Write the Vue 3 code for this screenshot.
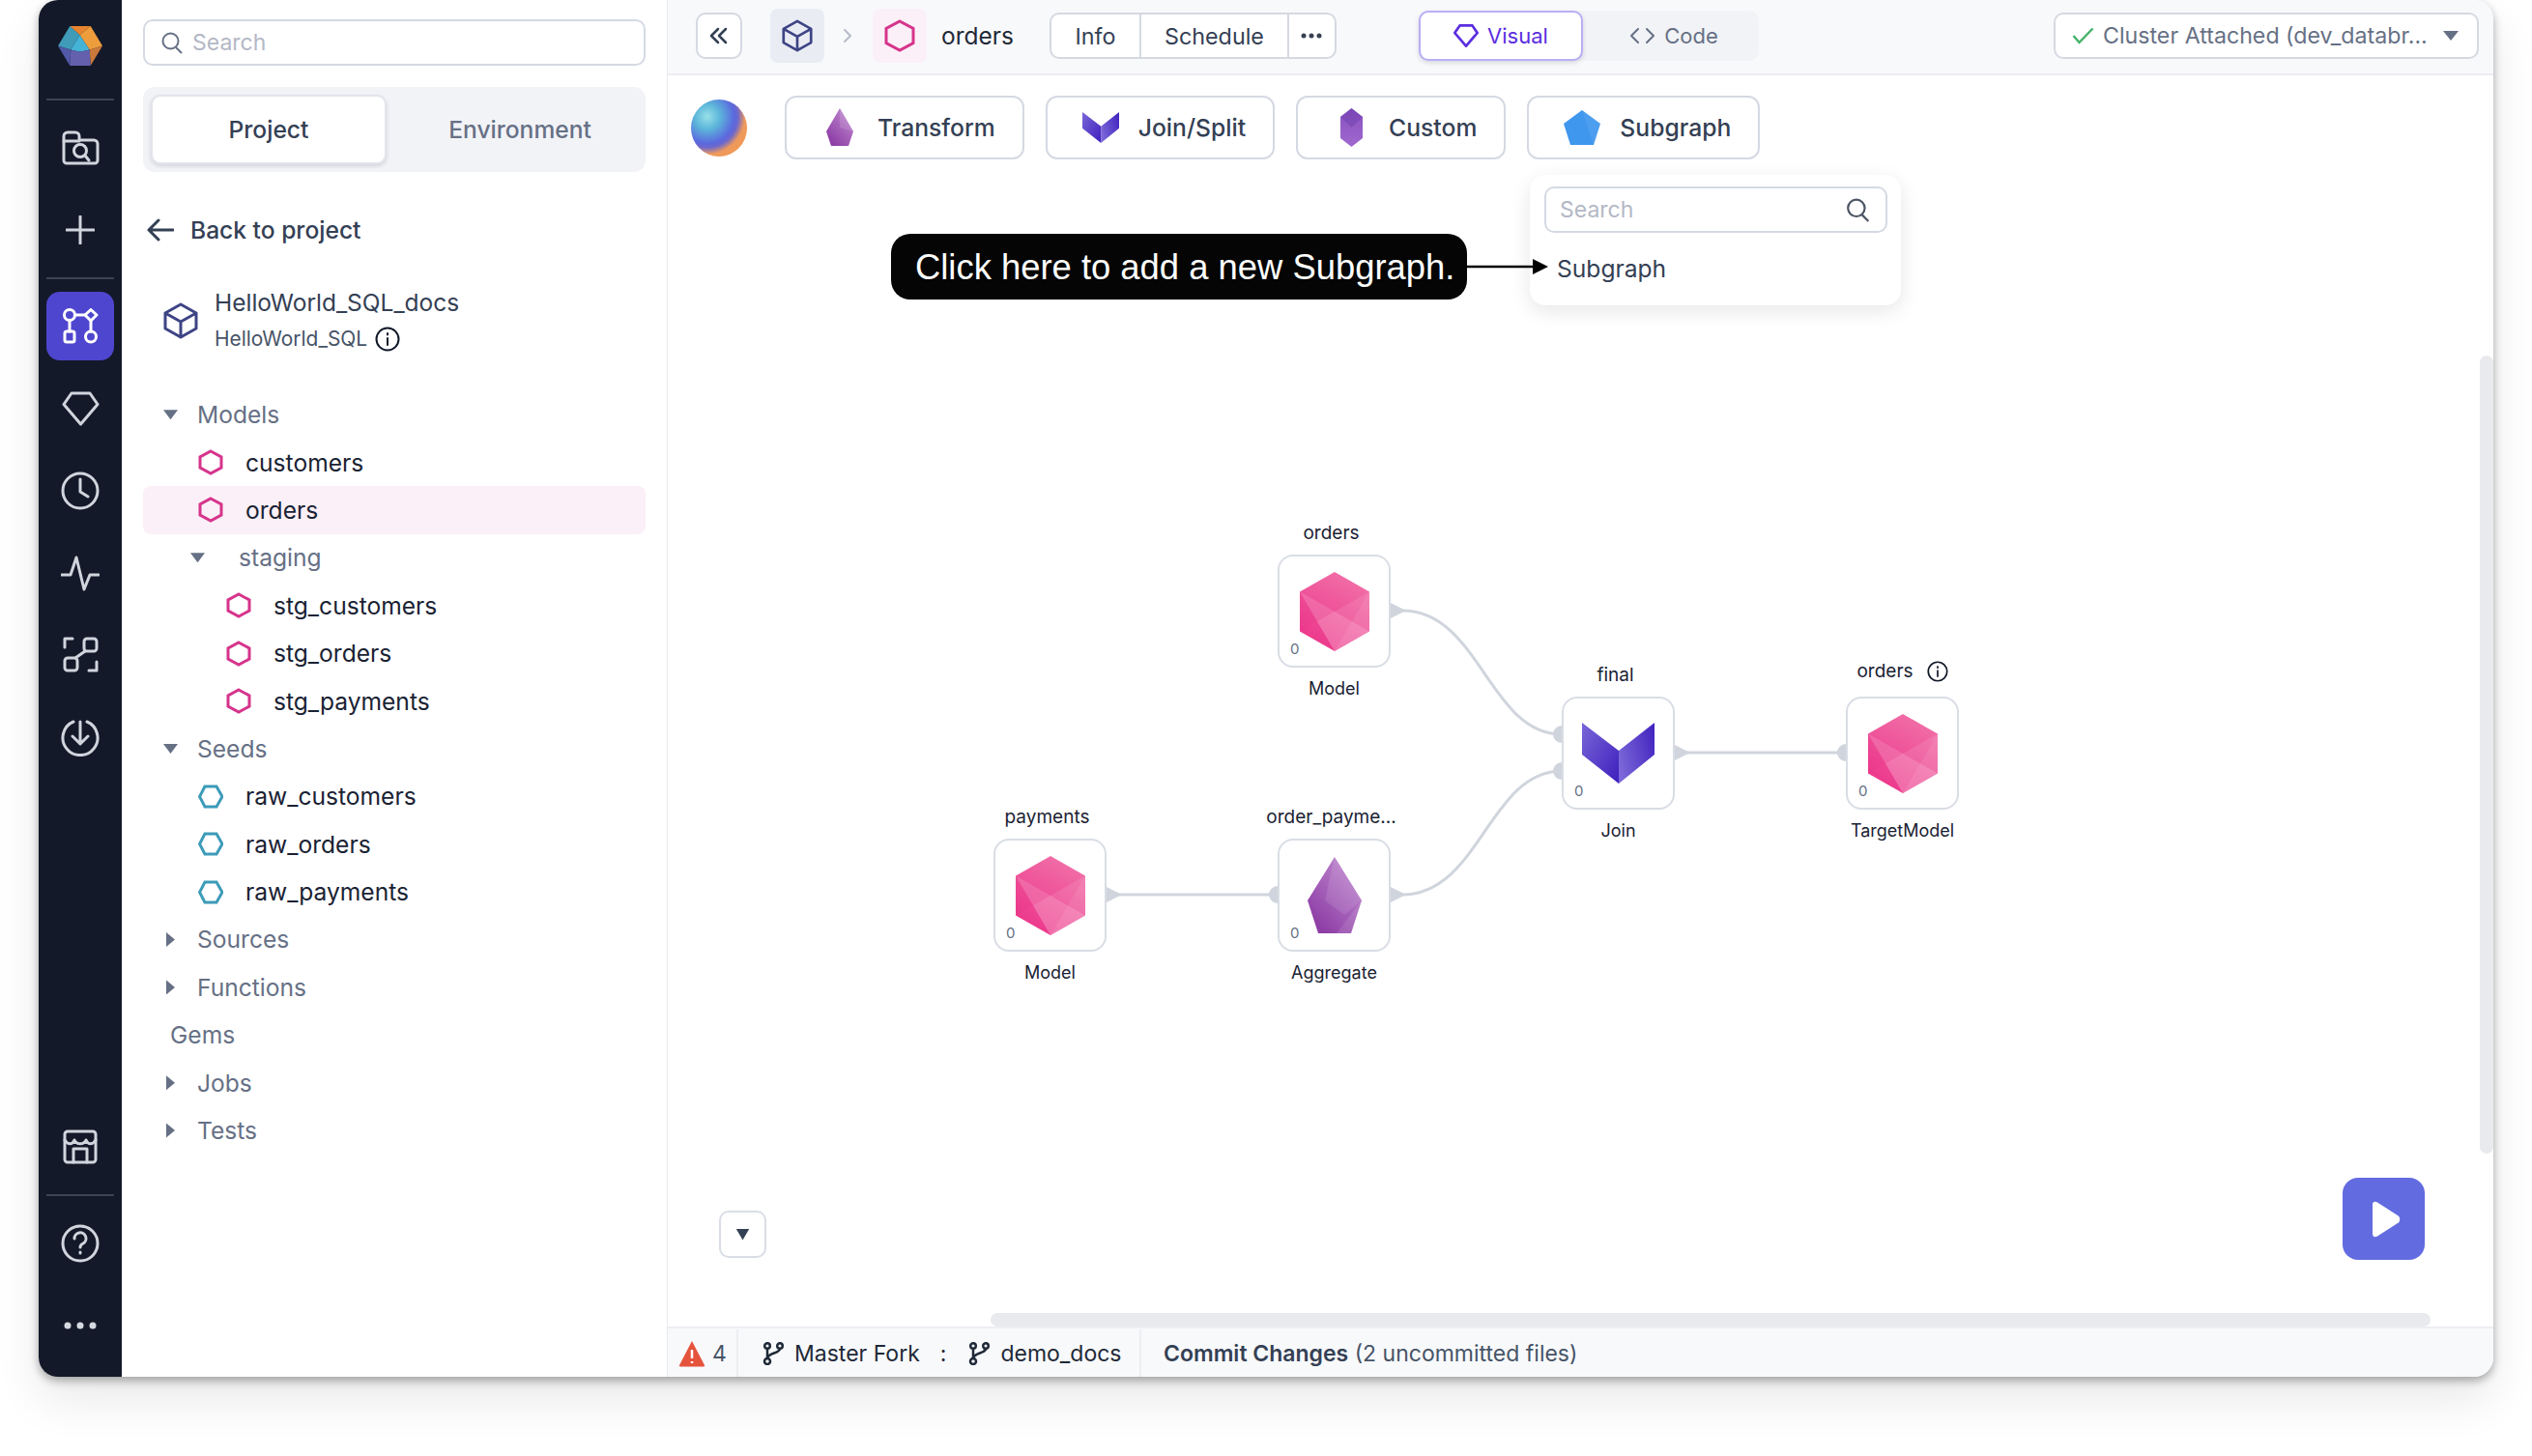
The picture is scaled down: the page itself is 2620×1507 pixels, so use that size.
<script setup>
const tree = [
  { label: 'Models', kind: 'open' },
  { label: 'customers', kind: 'model' },
  { label: 'orders', kind: 'model', active: true },
  { label: 'staging', kind: 'open', sub: true },
  { label: 'stg_customers', kind: 'model', sub: true },
  { label: 'stg_orders', kind: 'model', sub: true },
  { label: 'stg_payments', kind: 'model', sub: true },
  { label: 'Seeds', kind: 'open' },
  { label: 'raw_customers', kind: 'seed' },
  { label: 'raw_orders', kind: 'seed' },
  { label: 'raw_payments', kind: 'seed' },
  { label: 'Sources', kind: 'closed' },
  { label: 'Functions', kind: 'closed' },
  { label: 'Gems', kind: 'plain' },
  { label: 'Jobs', kind: 'closed' },
  { label: 'Tests', kind: 'closed' }
]

const gems = [
  { name: 'orders', type: 'Model', icon: 'hex', x: 631, y: 496 },
  { name: 'payments', type: 'Model', icon: 'hex', x: 337, y: 790 },
  { name: 'order_payme...', type: 'Aggregate', icon: 'gem', x: 631, y: 790 },
  { name: 'final', type: 'Join', icon: 'join', x: 925, y: 643 },
  { name: 'orders', type: 'TargetModel', icon: 'hex', x: 1219, y: 643, info: true }
]

const triangles = [[748, 554], [454, 848], [748, 848], [1042, 701]]
const sockets = [[631, 848], [925, 682], [925, 720], [1219, 701]]
</script>

<template>
  <div class="page">
    <div class="window">
      <aside class="rail">
        <div class="slot logo">
          <svg width="46" height="41" viewBox="0 0 45 40">
            <polygon points="12,0 33,0 22,9" fill="#e8842f" />
            <polygon points="33,0 45,20 32,24 22,9" fill="#ee9d3c" />
            <polygon points="45,20 33,40 32,24" fill="#c9793a" />
            <polygon points="12,0 22,9 13,24 0,20" fill="#3f9bb8" />
            <polygon points="22,9 32,24 22,26 13,24" fill="#45b3d6" />
            <polygon points="13,24 22,26 32,24 33,40 12,40" fill="#6460ad" />
            <polygon points="0,20 13,24 12,40" fill="#5259a8" />
          </svg>
        </div>
        <div class="rail-line first"></div>
        <div class="slot">
          <svg width="39" height="36" viewBox="0 0 39 36" class="ri">
            <path d="M2 11V6a4 4 0 0 1 4-4h8a4 4 0 0 1 4 4v4h15a4 4 0 0 1 4 4v17a3 3 0 0 1-3 3H5a3 3 0 0 1-3-3z" />
            <path d="M2 11h16" />
            <circle cx="19" cy="21" r="6.5" />
            <path d="M24 26l4 5" />
          </svg>
        </div>
        <div class="slot">
          <svg width="30" height="30" viewBox="0 0 30 30" class="ri"><path d="M15 1v28M1 15h28" /></svg>
        </div>
        <div class="rail-line"></div>
        <div class="slot on">
          <svg width="37" height="37" viewBox="0 0 37 37" class="ri white">
            <circle cx="7" cy="7" r="5.5" />
            <path d="M29 1.5l6 5.5-6 6-6-6z" />
            <rect x="2" y="24" width="10" height="11" rx="2" />
            <circle cx="29" cy="29.5" r="5.5" />
            <path d="M12.5 7h10.500M7 12.500V24M29 13v11" />
          </svg>
        </div>
        <div class="slot">
          <svg width="39" height="36" viewBox="0 0 39 36" class="ri"><path d="M10 2h19l8 11.500L19.500 34 2 13.500z" /></svg>
        </div>
        <div class="slot">
          <svg width="40" height="40" viewBox="0 0 40 40" class="ri"><circle cx="20" cy="20" r="18" /><path d="M20 8v13l8 5" /></svg>
        </div>
        <div class="slot">
          <svg width="40" height="38" viewBox="0 0 40 38" class="ri"><path d="M1 21h9l6-18 8 33 6-15h9" /></svg>
        </div>
        <div class="slot">
          <svg width="37" height="37" viewBox="0 0 37 37" class="ri">
            <path d="M2 11V2h8M35 26v9h-8" />
            <rect x="22" y="2" width="13" height="13" rx="3" />
            <rect x="2" y="22" width="13" height="13" rx="3" />
            <path d="M13 22l10-7" />
          </svg>
        </div>
        <div class="slot">
          <svg width="40" height="40" viewBox="0 0 40 40" class="ri">
            <path d="M13 4a18 18 0 1 0 14 0" />
            <path d="M20 4v22M12 19l8 8 8-8" />
          </svg>
        </div>

        <div class="rail-bottom">
          <div class="slot">
            <svg width="36" height="36" viewBox="0 0 36 36" class="ri">
              <rect x="2" y="2" width="32" height="32" rx="3" />
              <path d="M2 11c3 5 8 5 10 0 2 5 10 5 12 0 2 5 7 5 10 0M11 34V20h14v14" />
            </svg>
          </div>
          <div class="rail-line"></div>
          <div class="slot">
            <svg width="40" height="40" viewBox="0 0 40 40" class="ri">
              <circle cx="20" cy="20" r="18" />
              <path d="M14 15a6 6 0 1 1 9 5c-2 1-3 2-3 4" />
              <path d="M20 29v1" />
            </svg>
          </div>
          <div class="slot">
            <svg width="34" height="8" viewBox="0 0 34 8"><circle cx="4" cy="4" r="3.500" fill="#d5d9e0" /><circle cx="17" cy="4" r="3.500" fill="#d5d9e0" /><circle cx="30" cy="4" r="3.500" fill="#d5d9e0" /></svg>
          </div>
        </div>
      </aside>

      <aside class="panel">
        <div class="search">
          <svg width="22" height="23" viewBox="0 0 22 23" class="si"><circle cx="9.500" cy="9.500" r="8" /><path d="M15 16l6 6" /></svg>
          <span>Search</span>
        </div>
        <div class="tabs">
          <div class="tab sel">Project</div>
          <div class="tab">Environment</div>
        </div>
        <div class="back">
          <svg width="28" height="24" viewBox="0 0 28 24" class="arrow"><path d="M27 12H2M12 2L2 12l10 10" /></svg>
          <span>Back to project</span>
        </div>
        <div class="project">
          <svg width="36" height="38" viewBox="0 0 36 38" class="cube"><path d="M18 2l16 9v16l-16 9-16-9V11zM2 11l16 9 16-9M18 20v16" /></svg>
          <div>
            <div class="p-title">HelloWorld_SQL_docs</div>
            <div class="p-sub">
              HelloWorld_SQL
              <svg width="26" height="26" viewBox="0 0 26 26" class="info"><circle cx="13" cy="13" r="11.500" /><path d="M13 12v7M13 7v1.500" /></svg>
            </div>
          </div>
        </div>

        <div class="tree">
          <div
            v-for="item in tree"
            :key="item.label"
            class="row"
            :class="[item.kind, { sub: item.sub, active: item.active }]"
          >
            <i v-if="item.kind === 'open'" class="caret down"></i>
            <i v-else-if="item.kind === 'closed'" class="caret right"></i>
            <svg v-else-if="item.kind === 'model'" width="26" height="27" viewBox="0 0 26 27" class="leaf"><path d="M13 2l11 6v11l-11 6-11-6V8z" fill="none" stroke="#d6348c" stroke-width="3" /></svg>
            <svg v-else-if="item.kind === 'seed'" width="26" height="25" viewBox="0 0 26 25" class="leaf"><path d="M7 2h12l6 10.500L19 23H7L1.500 12.500z" fill="none" stroke="#3c9bb9" stroke-width="3" /></svg>
            <span>{{ item.label }}</span>
          </div>
        </div>
      </aside>

      <main class="main">
        <header class="topbar">
          <button class="collapse">
            <svg width="20" height="18" viewBox="0 0 20 18" class="thin"><path d="M9 2L2 9l7 7M17 2l-7 7 7 7" /></svg>
          </button>
          <div class="crumb blue">
            <svg width="32" height="34" viewBox="0 0 36 38" class="cube"><path d="M18 2l16 9v16l-16 9-16-9V11zM2 11l16 9 16-9M18 20v16" /></svg>
          </div>
          <svg width="10" height="16" viewBox="0 0 10 16" class="chev"><path d="M2 2l6 6-6 6" /></svg>
          <div class="crumb pink">
            <svg width="32" height="34" viewBox="0 0 32 34"><path d="M16 2l14 7.500v15L16 32 2 24.500v-15z" fill="none" stroke="#d6348c" stroke-width="3" /></svg>
          </div>
          <span class="crumb-name">orders</span>
          <div class="btn-group">
            <div class="gbtn g-info">Info</div>
            <div class="gbtn g-sched">Schedule</div>
            <div class="gbtn more">
              <svg width="22" height="6" viewBox="0 0 22 6"><circle cx="3" cy="3" r="2.500" fill="#374151" /><circle cx="11" cy="3" r="2.500" fill="#374151" /><circle cx="19" cy="3" r="2.500" fill="#374151" /></svg>
            </div>
          </div>
          <div class="mode">
            <div class="mode-btn sel">
              <svg width="26" height="24" viewBox="0 0 39 36"><path d="M10 2h19l8 11.500L19.500 34 2 13.500z" fill="none" stroke="#5b2ee0" stroke-width="4" /></svg>
              Visual
            </div>
            <div class="mode-btn code">
              <svg width="27" height="18" viewBox="0 0 27 18" class="thin gray"><path d="M9 2L2 9l7 7M18 2l7 7-7 7" /></svg>
              Code
            </div>
          </div>
          <div class="cluster">
            <svg width="23" height="18" viewBox="0 0 23 18"><path d="M1.500 9l6 7L21.500 1.500" fill="none" stroke="#45b36b" stroke-width="2.500" /></svg>
            <span>Cluster Attached (dev_databr...</span>
            <i class="caret down big"></i>
          </div>
        </header>

        <section class="canvas">
          <svg class="edges" width="1889" height="1295" viewBox="0 0 1889 1295">
            <defs>
              <linearGradient id="hexFill" x1="0.7" y1="0" x2="0.2" y2="1">
                <stop offset="0" stop-color="#f170a8" />
                <stop offset="1" stop-color="#ec3389" />
              </linearGradient>
              <linearGradient id="gemFill" x1="0.8" y1="0.1" x2="0.2" y2="0.9">
                <stop offset="0" stop-color="#bd85cd" />
                <stop offset="1" stop-color="#8e3fa6" />
              </linearGradient>
              <linearGradient id="joinL" x1="0" y1="0" x2="1" y2="1">
                <stop offset="0" stop-color="#7a66d8" />
                <stop offset="1" stop-color="#3d1fbd" />
              </linearGradient>
              <linearGradient id="joinR" x1="0" y1="0.6" x2="1" y2="0.2">
                <stop offset="0" stop-color="#7a66d8" />
                <stop offset="1" stop-color="#4426c0" />
              </linearGradient>
              <linearGradient id="customFill" x1="0" y1="0" x2="0" y2="1">
                <stop offset="0" stop-color="#8750bf" />
                <stop offset="1" stop-color="#a069cf" />
              </linearGradient>
            </defs>
            <g fill="none" stroke="#d0d5dd" stroke-width="3">
              <path d="M760 554C840 554 850 682 925 682" />
              <path d="M760 848C840 848 850 720 925 720" />
              <path d="M460 848H631" />
              <path d="M1050 701H1219" />
            </g>
            <polygon v-for="t in triangles" :key="t[0] + '-' + t[1]" :points="`${t[0]},${t[1] - 8} ${t[0] + 16},${t[1]} ${t[0]},${t[1] + 8}`" fill="#d0d5dd" />
            <circle v-for="s in sockets" :key="s[0] + '-' + s[1]" :cx="s[0]" :cy="s[1]" r="9" fill="#d0d5dd" />
          </svg>

          <div class="toolbar">
            <div class="orb"></div>
            <div class="tool">
              <span class="tool-ico"><svg width="28" height="40" viewBox="0 0 28 40"><polygon points="14,0 28,24 23,39 5,39 0,24" fill="url(#gemFill)" /><polygon points="14,0 28,24 14,20" fill="#fff" opacity=".12" /></svg></span>
              Transform
            </div>
            <div class="tool">
              <span class="tool-ico"><svg width="38" height="32" viewBox="0 0 75 63"><polygon points="0,0 38,29 38,63 0,33" fill="url(#joinL)" /><polygon points="38,29 75,0 75,33 38,63" fill="url(#joinR)" /></svg></span>
              Join/Split
            </div>
            <div class="tool">
              <span class="tool-ico"><svg width="23" height="40" viewBox="0 0 23 40"><polygon points="11.500,0 23,9 23,31 11.500,40 0,31 0,9" fill="url(#customFill)" /><polygon points="0,9 11.500,0 23,9 11.500,20" fill="#6f3fae" opacity=".5" /></svg></span>
              Custom
            </div>
            <div class="tool">
              <span class="tool-ico"><svg width="38" height="36" viewBox="0 0 38 36"><polygon points="19,0 38,14 31,36 7,36 0,14" fill="#4097ee" /><polygon points="19,0 38,14 31,36" fill="#fff" opacity=".07" /></svg></span>
              Subgraph
            </div>
          </div>

          <div class="callout">
            <span>Click here to add a new Subgraph.</span>
            <svg class="pointer" width="86" height="18" viewBox="0 0 86 18"><path d="M0 9h70" stroke="#000" stroke-width="2.500" /><polygon points="69,1 85,9 69,17" fill="#000" /></svg>
          </div>

          <div class="menu">
            <div class="menu-search">
              <span>Search</span>
              <svg width="25" height="25" viewBox="0 0 22 23" class="si dark"><circle cx="9.500" cy="9.500" r="8" /><path d="M15 16l6 6" /></svg>
            </div>
            <div class="menu-item">Subgraph</div>
          </div>

          <div
            v-for="gem in gems"
            :key="gem.type + gem.x"
            class="node"
            :style="{ left: gem.x + 'px', top: gem.y + 'px' }"
          >
            <div class="node-title" :class="{ target: gem.info }">
              <span>{{ gem.name }}</span>
              <svg v-if="gem.info" width="22" height="22" viewBox="0 0 26 26" class="info"><circle cx="13" cy="13" r="11.500" /><path d="M13 12v7M13 7v1.500" /></svg>
            </div>
            <svg v-if="gem.icon === 'hex'" width="72" height="82" viewBox="0 0 72 82">
              <polygon points="36,0 72,20.500 72,61.500 36,82 0,61.500 0,20.500" fill="url(#hexFill)" />
              <polygon points="0,20.500 36,41 72,61.500 36,82" fill="#fff" opacity=".24" />
              <polygon points="72,20.500 36,41 72,61.500" fill="#fff" opacity=".1" />
              <polygon points="72,20.500 36,82 54,71.500 72,61.500" fill="#fff" opacity=".08" />
              <polygon points="0,61.500 36,41 0,20.500" fill="#ec3389" opacity=".25" />
            </svg>
            <svg v-else-if="gem.icon === 'gem'" width="56" height="79" viewBox="0 0 56 79">
              <polygon points="28,0 56,45 45,79 11,79 0,45" fill="url(#gemFill)" />
              <polygon points="28,0 56,45 38,60 18,45" fill="#fff" opacity=".1" />
              <polygon points="56,45 45,79 30,79" fill="#fff" opacity=".1" />
            </svg>
            <svg v-else width="75" height="63" viewBox="0 0 75 63">
              <polygon points="0,0 38,29 38,63 0,33" fill="url(#joinL)" />
              <polygon points="38,29 75,0 75,33 38,63" fill="url(#joinR)" />
            </svg>
            <span class="node-count">0</span>
            <div class="node-type">{{ gem.type }}</div>
          </div>

          <button class="fold"><i class="caret down dark"></i></button>
          <button class="play">
            <svg width="30" height="38" viewBox="0 0 30 38"><path d="M1 4c0-3 2-4 5-2.500L27 15c3 2 3 6 0 8L6 36.500C3 38 1 37 1 34z" fill="#fff" /></svg>
          </button>
          <div class="scroll-x"></div>
          <div class="scroll-y"></div>
        </section>

        <footer class="status">
          <div class="st warn">
            <svg width="28" height="28" viewBox="0 0 28 28"><path d="M14 1l13 25a1 1 0 0 1-1 1.500H2A1 1 0 0 1 1 26z" fill="#e5533d" /><path d="M14 10v9M14 22v2" stroke="#fff" stroke-width="2.500" /></svg>
            <span>4</span>
          </div>
          <div class="st branch">
            <svg width="24" height="24" viewBox="0 0 24 24" class="fork"><circle cx="6" cy="20" r="3" /><circle cx="6" cy="4" r="2.800" /><circle cx="19" cy="4" r="2.800" /><path d="M6 7v10M19 7c0 5-13 4-13 10" /></svg>
            <span>Master Fork</span>
            <span class="colon">:</span>
            <svg width="24" height="24" viewBox="0 0 24 24" class="fork"><circle cx="6" cy="20" r="3" /><circle cx="6" cy="4" r="2.800" /><circle cx="19" cy="4" r="2.800" /><path d="M6 7v10M19 7c0 5-13 4-13 10" /></svg>
            <span>demo_docs</span>
          </div>
          <div class="st commit"><b>Commit Changes</b> (2 uncommitted files)</div>
        </footer>
      </main>
    </div>
  </div>
</template>

<style>
html {
  overflow: hidden;
  background: #fff;
}
body {
  margin: 0;
}
</style>

<style scoped>
.page {
  width: 2620px;
  height: 1507px;
  box-sizing: border-box;
  padding-left: 40px;
  background: #fff;
}
.window {
  display: flex;
  width: 2540px;
  height: 1425px;
  border-radius: 20px;
  overflow: hidden;
  background: #fff;
  font-family: Inter, "Noto Sans", sans-serif;
  box-shadow: 0 4px 10px rgba(0, 0, 0, 0.32), 0 24px 48px rgba(0, 0, 0, 0.09);
}

/* left rail */
.rail {
  width: 86px;
  flex: none;
  box-sizing: border-box;
  background: #131929;
  display: flex;
  flex-direction: column;
  align-items: center;
  gap: 14px;
  padding: 12px 0 18px;
}
.slot {
  width: 70px;
  height: 71px;
  flex: none;
  display: flex;
  align-items: center;
  justify-content: center;
  border-radius: 14px;
}
.slot.on {
  background: #4f46cf;
}
.rail-line {
  width: 70px;
  height: 2px;
  flex: none;
  background: #3c4353;
  margin-bottom: -1px;
}
.rail-line.first {
  margin-top: 5px;
}
.rail-bottom {
  margin-top: auto;
  display: flex;
  flex-direction: column;
  align-items: center;
  gap: 14px;
}
.ri {
  fill: none;
  stroke: #d0d5dd;
  stroke-width: 3;
  stroke-linecap: round;
  stroke-linejoin: round;
}
.ri.white {
  stroke: #fff;
}

/* project panel */
.panel {
  width: 565px;
  flex: none;
  box-sizing: border-box;
  padding: 20px 22px 0 22px;
  border-right: 1px solid #e8eaee;
  color: #1a2233;
}
.search {
  height: 48px;
  box-sizing: border-box;
  display: flex;
  align-items: center;
  gap: 10px;
  padding-left: 17px;
  border: 2px solid #d5d9e2;
  border-radius: 10px;
  font-size: 23px;
  color: #b3b8c6;
}
.si {
  fill: none;
  stroke: #667085;
  stroke-width: 2;
}
.tabs {
  height: 88px;
  box-sizing: border-box;
  display: flex;
  align-items: center;
  margin-top: 22px;
  padding: 8px;
  background: #f2f3f7;
  border-radius: 12px;
}
.tab {
  flex: 1;
  height: 72px;
  display: flex;
  align-items: center;
  justify-content: center;
  padding-left: 16px;
  font-size: 24.6px;
  font-weight: 500;
  color: #667085;
}
.tab.sel {
  flex: none;
  width: 244px;
  padding-left: 0;
  box-sizing: border-box;
  background: #fff;
  color: #344054;
  border: 2px solid #e2e5eb;
  border-radius: 10px;
  box-shadow: 0 2px 4px rgba(16, 24, 40, 0.14);
}
.back {
  height: 40px;
  margin-top: 40px;
  display: flex;
  align-items: center;
  gap: 17px;
  padding-left: 4px;
  font-size: 24.6px;
  font-weight: 500;
  color: #344054;
}
.arrow, .thin, .chev, .cube, .info, .fork {
  fill: none;
  stroke-linecap: round;
  stroke-linejoin: round;
}
.arrow {
  stroke: #344054;
  stroke-width: 3;
}
.project {
  display: flex;
  align-items: center;
  gap: 17px;
  margin-top: 37px;
  padding-left: 21px;
}
.cube {
  flex: none;
  stroke: #3d4484;
  stroke-width: 3;
}
.p-title {
  font-size: 24.5px;
  line-height: 36px;
  color: #344054;
}
.p-sub {
  display: flex;
  align-items: center;
  gap: 8px;
  font-size: 20.9px;
  line-height: 36px;
  color: #475467;
  margin-top: 2px;
}
.info {
  stroke: #101828;
  stroke-width: 2;
}
.tree {
  margin-top: 35.5px;
}
.row {
  height: 49.4px;
  display: flex;
  align-items: center;
  font-size: 24.6px;
  border-radius: 8px;
  color: #1a2233;
  padding-left: 21px;
}
.row.open, .row.closed, .row.plain {
  color: #667085;
}
.row.plain {
  padding-left: 28px;
}
.row.model, .row.seed {
  padding-left: 57px;
}
.row.model.sub {
  padding-left: 86px;
}
.row.open.sub {
  padding-left: 49px;
}
.row.open.sub .caret {
  margin-right: 35px;
}
.row.active {
  background: #fbf0f7;
}
.leaf {
  flex: none;
  margin-right: 23px;
}
.caret {
  display: block;
  flex: none;
  width: 15px;
  height: 10px;
  margin-right: 20px;
  background: #667085;
}
.caret.down {
  clip-path: polygon(0 0, 100% 0, 50% 100%);
}
.caret.right {
  width: 9px;
  height: 15px;
  margin-left: 3px;
  margin-right: 23px;
  clip-path: polygon(0 0, 100% 50%, 0 100%);
}
.caret.big {
  width: 16px;
  margin: 0 19px 0 auto;
}
.caret.dark {
  width: 14px;
  height: 12px;
  margin: 0;
  background: #344054;
}

/* top bar */
.main {
  flex: 1;
  min-width: 0;
  display: flex;
  flex-direction: column;
}
.topbar {
  height: 78px;
  flex: none;
  box-sizing: border-box;
  display: flex;
  align-items: center;
  padding: 0 15px 2px 29px;
  background: #f8f9fb;
  border-bottom: 2px solid #eceef2;
}
.collapse {
  width: 48px;
  height: 48px;
  padding: 0;
  display: flex;
  align-items: center;
  justify-content: center;
  background: #fff;
  border: 2px solid #d5d9e2;
  border-radius: 10px;
}
.thin {
  stroke: #344054;
  stroke-width: 2.500;
}
.thin.gray {
  stroke: #667085;
  stroke-width: 2;
}
.crumb {
  width: 56px;
  height: 56px;
  display: flex;
  align-items: center;
  justify-content: center;
  border-radius: 8px;
}
.crumb.blue {
  margin-left: 29px;
  background: #eaecf4;
}
.crumb.pink {
  background: #fbf0f7;
}
.chev {
  margin: 0 21px 0 19px;
  stroke: #b6bbc7;
  stroke-width: 2;
}
.crumb-name {
  margin-left: 15px;
  font-size: 24.5px;
  color: #1f2937;
}
.btn-group {
  display: flex;
  width: 297px;
  height: 48px;
  flex: none;
  box-sizing: border-box;
  margin-left: 37px;
  background: #fff;
  border: 2px solid #d5d9e2;
  border-radius: 10px;
}
.gbtn {
  display: flex;
  align-items: center;
  justify-content: center;
  box-sizing: border-box;
  font-size: 23.3px;
  color: #344054;
  border-right: 2px solid #d5d9e2;
}
.g-info {
  width: 93px;
}
.g-sched {
  width: 153px;
}
.gbtn.more {
  flex: 1;
  border: 0;
}
.mode {
  display: flex;
  height: 52px;
  width: 352px;
  margin-left: 85px;
  background: #f2f3f7;
  border-radius: 10px;
}
.mode-btn {
  flex: 1;
  display: flex;
  align-items: center;
  justify-content: center;
  gap: 9px;
  font-size: 22px;
  color: #667085;
}
.mode-btn.code {
  padding-left: 6px;
}
.mode-btn.sel {
  flex: none;
  width: 170px;
  box-sizing: border-box;
  color: #5b2ee0;
  background: #fff;
  border: 2px solid #b9aef5;
  border-radius: 10px;
  box-shadow: 0 2px 5px rgba(16, 24, 40, 0.14);
}
.cluster {
  margin-left: auto;
  width: 440px;
  height: 48px;
  box-sizing: border-box;
  display: flex;
  align-items: center;
  gap: 9px;
  padding-left: 17px;
  background: #fff;
  border: 2px solid #d5d9e2;
  border-radius: 10px;
  font-size: 23.2px;
  color: #667085;
  white-space: nowrap;
}

/* canvas */
.canvas {
  position: relative;
  flex: 1;
  min-height: 0;
  overflow: hidden;
  background: #fff;
}
.edges {
  position: absolute;
  left: 0;
  top: 0;
}
.toolbar {
  position: relative;
  display: flex;
  align-items: center;
  gap: 22px;
  padding: 21px 0 0 24px;
}
.orb {
  width: 58px;
  height: 59px;
  margin-right: 17px;
  border-radius: 50%;
  background: radial-gradient(circle 50px at 29% 30%, #98e0e8 0, #5cb6da 26%, #5b68de 56%, #6d68cc 64%, #ee9a5a 78%, #f29a58 100%);
}
.tool {
  height: 66px;
  box-sizing: border-box;
  display: flex;
  align-items: center;
  gap: 15px;
  padding: 0 28px 0 31px;
  border: 2px solid #d5d9e2;
  border-radius: 12px;
  font-size: 24.7px;
  font-weight: 500;
  color: #344054;
  background: #fff;
}
.tool-ico {
  width: 48px;
  display: flex;
  justify-content: center;
}
.callout {
  position: absolute;
  left: 231px;
  top: 164px;
  width: 596px;
  height: 68px;
  box-sizing: border-box;
  display: flex;
  align-items: center;
  padding: 2px 0 0 25px;
  background: #050505;
  border-radius: 20px;
  color: #fff;
  font-family: "Liberation Sans", Arial, sans-serif;
  font-size: 36.4px;
  white-space: nowrap;
  z-index: 4;
}
.pointer {
  position: absolute;
  left: 595px;
  top: 25px;
}
.menu {
  position: absolute;
  left: 892px;
  top: 103px;
  width: 384px;
  height: 135px;
  box-sizing: border-box;
  padding: 12px 14px 0 15px;
  background: #fff;
  border-radius: 16px;
  box-shadow: 0 6px 20px rgba(16, 24, 40, 0.1);
  z-index: 3;
}
.menu-search {
  height: 48px;
  box-sizing: border-box;
  display: flex;
  align-items: center;
  justify-content: space-between;
  padding: 0 16px 0 14px;
  border: 2px solid #d5d9e2;
  border-radius: 10px;
  font-size: 23px;
  color: #b3b8c6;
}
.si.dark {
  stroke: #4b5563;
}
.menu-item {
  margin-top: 19px;
  padding-left: 13px;
  font-size: 24.6px;
  line-height: 36px;
  color: #344054;
}
.node {
  position: absolute;
  width: 117px;
  height: 117px;
  box-sizing: border-box;
  display: flex;
  align-items: center;
  justify-content: center;
  background: #fff;
  border: 2px solid #d9dde5;
  border-radius: 16px;
}
.node-title {
  position: absolute;
  left: -40px;
  right: -40px;
  bottom: calc(100% + 12px);
  display: flex;
  align-items: center;
  justify-content: center;
  gap: 14px;
  padding-right: 6px;
  font-size: 19px;
  line-height: 24px;
  color: #1a2233;
  white-space: nowrap;
}
.node-title.target {
  bottom: calc(100% + 16px);
  padding-right: 0;
}
.node-count {
  position: absolute;
  left: 11px;
  top: 86px;
  font-size: 15px;
  line-height: 20px;
  color: #667085;
}
.node-type {
  position: absolute;
  left: -40px;
  right: -40px;
  top: calc(100% + 12px);
  text-align: center;
  font-size: 18px;
  line-height: 24px;
  color: #1a2233;
}
.fold {
  position: absolute;
  left: 53px;
  top: 1175px;
  width: 49px;
  height: 49px;
  padding: 0;
  display: flex;
  align-items: center;
  justify-content: center;
  background: #fff;
  border: 2px solid #d9dde5;
  border-radius: 10px;
}
.play {
  position: absolute;
  left: 1733px;
  top: 1141px;
  width: 85px;
  height: 85px;
  padding: 0 0 0 4px;
  display: flex;
  align-items: center;
  justify-content: center;
  background: #636be0;
  border: 0;
  border-radius: 16px;
}
.scroll-x {
  position: absolute;
  left: 334px;
  bottom: 0;
  width: 1490px;
  height: 14px;
  background: #e9eaee;
  border-radius: 7px;
}
.scroll-y {
  position: absolute;
  right: 0;
  top: 290px;
  width: 14px;
  height: 826px;
  background: #e9eaee;
  border-radius: 7px;
}

/* status bar */
.status {
  height: 52px;
  flex: none;
  box-sizing: border-box;
  display: flex;
  align-items: stretch;
  padding-top: 1px;
  background: #f8f9fb;
  border-top: 2px solid #eceef2;
  font-size: 23px;
  color: #1f2937;
}
.st {
  display: flex;
  align-items: center;
}
.warn {
  width: 73px;
  box-sizing: border-box;
  padding-left: 11px;
  gap: 7px;
  border-right: 2px solid #eceef2;
  color: #475467;
}
.branch {
  width: 417px;
  box-sizing: border-box;
  padding-left: 24px;
  gap: 10px;
  border-right: 2px solid #eceef2;
}
.colon {
  margin: 0 12px 0 11px;
}
.fork {
  stroke: #1f2937;
  stroke-width: 2.500;
}
.commit {
  padding-left: 23px;
  color: #475467;
  white-space: pre;
}
.commit b {
  font-weight: 600;
  color: #344054;
}
</style>
